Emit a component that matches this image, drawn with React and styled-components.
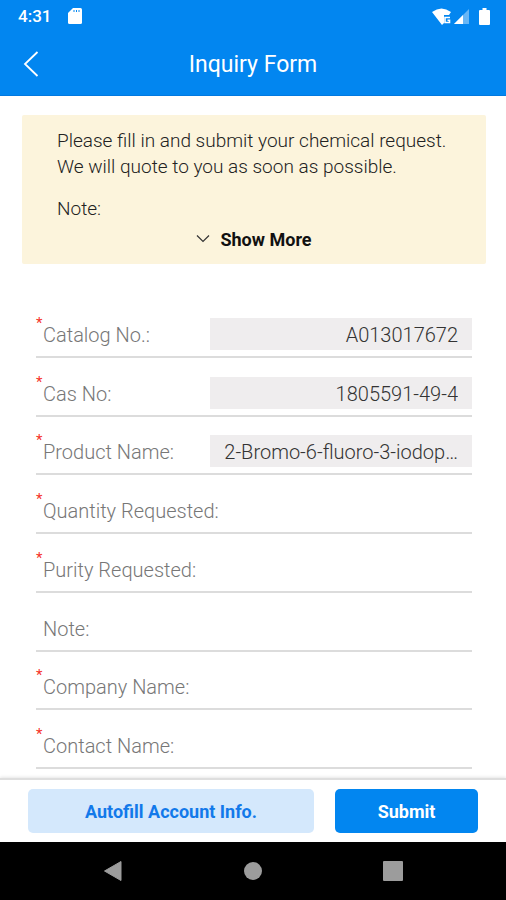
import styled, { createGlobalStyle } from "styled-components";

const GlobalStyle = createGlobalStyle`
    * {
        box-sizing: border-box;
    }

    body {
        margin: 0;
        background-color: white;
        font-family: Roboto, "Liberation Sans", sans-serif;
    }

    button, input {
        font-family: inherit;
    }
`

const Screen = styled.div`
    min-height: 100vh;
    display: flex;
    flex-direction: column;
`

const Header = styled.header`
    background-color: #0286f0;
    color: white;
`

const StatusBar = styled.div`
    height: 32px;
    padding: 0 16px 0 18px;
    display: flex;
    align-items: center;
    justify-content: space-between;
`

const StatusGroup = styled.div`
    display: flex;
    align-items: center;
    gap: ${(props) => props.$gap}px;
`

const Time = styled.span`
    font-size: 17px;
    font-weight: 500;
`

const TitleBar = styled.div`
    height: 64px;
    padding: 0 20px;
    display: grid;
    grid-template-columns: 24px 1fr 24px;
    align-items: center;
    border-bottom: 1px solid #0279e0;
`

const BackButton = styled.button`
    height: 32px;
    padding: 0;
    border: none;
    background: none;
    color: inherit;
    display: flex;
    align-items: center;
    cursor: pointer;
`

const Title = styled.h1`
    margin: 2px 0 0;
    font-size: 23px;
    font-weight: 400;
    text-align: center;
`

const Main = styled.main`
    flex: 1;
    padding: 19px 20px 9px 22px;
    display: flex;
    flex-direction: column;
`

const Notice = styled.section`
    padding: 13px 35px 8px;
    background-color: #fcf4dc;
    color: #222;
    border-radius: 2px;
    font-size: 19px;
    font-weight: 300;
    line-height: 26px;
`

const NoticeText = styled.p`
    margin: 0 0 16px;
`

const NoticeLabel = styled.p`
    margin: 0;
`

const ShowMore = styled.button`
    width: 100%;
    height: 34px;
    padding: 0;
    border: none;
    background: none;
    color: #111;
    display: flex;
    align-items: center;
    justify-content: center;
    gap: 10px;
    font-size: 18px;
    font-weight: 700;
    cursor: pointer;
`

const Form = styled.form`
    flex: 1;
    margin: 35px 14px 0;
    display: flex;
    flex-direction: column;
`

const Row = styled.div`
    flex: 1 0 auto;
    min-height: 58px;
    padding-bottom: 6px;
    display: flex;
    align-items: flex-end;
    border-bottom: 2px solid #dcdcdc;
`

const Star = styled.span`
    width: 7px;
    height: 32px;
    color: #f5332a;
    font-size: 15px;
    line-height: 10px;
`

const Label = styled.label`
    flex: 1;
    color: #777;
    font-size: 20px;
    font-weight: 300;
    line-height: 30px;
    white-space: nowrap;
`

const Input = styled.input`
    width: ${(props) => (props.readOnly ? "60%" : "50%")};
    height: 32px;
    padding: 2px 14px 0 8px;
    border: none;
    outline: none;
    background-color: ${(props) => (props.readOnly ? "#efedee" : "transparent")};
    color: #333;
    font-size: 20px;
    font-weight: 300;
    text-align: right;
    text-overflow: ellipsis;
`

const Actions = styled.footer`
    padding: 9px 28px;
    display: flex;
    gap: 21px;
    background-color: white;
    border-top: 2px solid #dedede;
    box-shadow: 0 -1px 3px rgba(0, 0, 0, 0.1);
`

const Button = styled.button`
    flex: ${(props) => (props.$primary ? 1 : 2)};
    height: 44px;
    padding: 0;
    border: none;
    border-radius: 5px;
    background-color: ${(props) => (props.$primary ? "#0286f0" : "#d4e8fc")};
    color: ${(props) => (props.$primary ? "white" : "#1279ea")};
    font-size: 18px;
    font-weight: 700;
    cursor: pointer;
`

const NavBar = styled.nav`
    height: 58px;
    padding: 0 43px;
    display: flex;
    background-color: black;
`

const NavButton = styled.button`
    flex: 1;
    padding: 0;
    border: none;
    background: none;
    color: #9c9c9c;
    display: flex;
    align-items: center;
    justify-content: center;
    cursor: pointer;
`

const fields = [
    { id: "catalog", label: "Catalog No.:", required: true, value: "A013017672" },
    { id: "cas", label: "Cas No:", required: true, value: "1805591-49-4" },
    { id: "product", label: "Product Name:", required: true, value: "2-Bromo-6-fluoro-3-iodop…" },
    { id: "quantity", label: "Quantity Requested:", required: true },
    { id: "purity", label: "Purity Requested:", required: true },
    { id: "note", label: "Note:" },
    { id: "company", label: "Company Name:", required: true },
    { id: "contact", label: "Contact Name:", required: true },
];

const Field = ({ id, label, required, value }) => {
    return (
        <Row>
            <Star aria-hidden="true">{required ? "*" : ""}</Star>
            <Label htmlFor={id}>{label}</Label>
            {value ? (
                <Input id={id} name={id} value={value} readOnly />
            ) : (
                <Input id={id} name={id} required={required} />
            )}
        </Row>
    );
}

const App = () => {
    return (
        <>
        <GlobalStyle/>
        <Screen>
            <Header>
                <StatusBar>
                    <StatusGroup $gap={17}>
                        <Time>4:31</Time>
                        <svg width="14" height="16" viewBox="0 0 14 16">
                            <path d="M5 0h7.500q1.500 0 1.500 1.500v13q0 1.500-1.500 1.500h-11Q0 16 0 14.500V5z" fill="white"/>
                            <path d="M6 2v2M8.500 2v2M11 2v2" stroke="#0286f0" strokeWidth="1"/>
                        </svg>
                    </StatusGroup>
                    <StatusGroup $gap={9}>
                        <svg width="38" height="17" viewBox="0 0 38 17">
                            <path d="M0 4Q9.500-3 19 4l-2 3h-5v8l-2 2z" fill="white"/>
                            <path d="M18 9.500h-5v5h4.500v-2.200h-2" fill="none" stroke="white" strokeWidth="1.600"/>
                            <path d="M37 1v15H22z" fill="white" opacity="0.400"/>
                            <path d="M31 7v9h-9z" fill="white"/>
                        </svg>
                        <svg width="11" height="17" viewBox="0 0 11 17">
                            <path d="M3.500 0h4v2H10q1 0 1 1v13q0 1-1 1H1q-1 0-1-1V3q0-1 1-1h2.500z" fill="white"/>
                        </svg>
                    </StatusGroup>
                </StatusBar>
                <TitleBar>
                    <BackButton aria-label="Back">
                        <svg width="22" height="28" viewBox="0 0 22 28">
                            <path d="M17.500 2L5 14l12.500 12" fill="none" stroke="white" strokeWidth="1.800"/>
                        </svg>
                    </BackButton>
                    <Title>Inquiry Form</Title>
                </TitleBar>
            </Header>
            <Main>
                <Notice>
                    <NoticeText>
                        Please fill in and submit your chemical request.<br/>
                        We will quote to you as soon as possible.
                    </NoticeText>
                    <NoticeLabel>Note:</NoticeLabel>
                    <ShowMore>
                        <svg width="14" height="10" viewBox="0 0 14 10">
                            <path d="M1 1.500l6 6 6-6" fill="none" stroke="#333" strokeWidth="1.200"/>
                        </svg>
                        Show More
                    </ShowMore>
                </Notice>
                <Form id="inquiry">
                    {fields.map((field) => (
                        <Field key={field.id} {...field}/>
                    ))}
                </Form>
            </Main>
            <Actions>
                <Button type="button">Autofill Account Info.</Button>
                <Button type="submit" form="inquiry" $primary>Submit</Button>
            </Actions>
            <NavBar>
                <NavButton aria-label="Back">
                    <svg width="20" height="22" viewBox="0 0 20 22">
                        <path d="M18 1.500v19L1.500 11z" fill="currentColor" stroke="currentColor" strokeLinejoin="round"/>
                    </svg>
                </NavButton>
                <NavButton aria-label="Home">
                    <svg width="18" height="18" viewBox="0 0 18 18">
                        <circle cx="9" cy="9" r="9" fill="currentColor"/>
                    </svg>
                </NavButton>
                <NavButton aria-label="Recent apps">
                    <svg width="20" height="20" viewBox="0 0 20 20">
                        <rect width="20" height="20" rx="1" fill="currentColor"/>
                    </svg>
                </NavButton>
            </NavBar>
        </Screen>
        </>
    );
}

export default App;
